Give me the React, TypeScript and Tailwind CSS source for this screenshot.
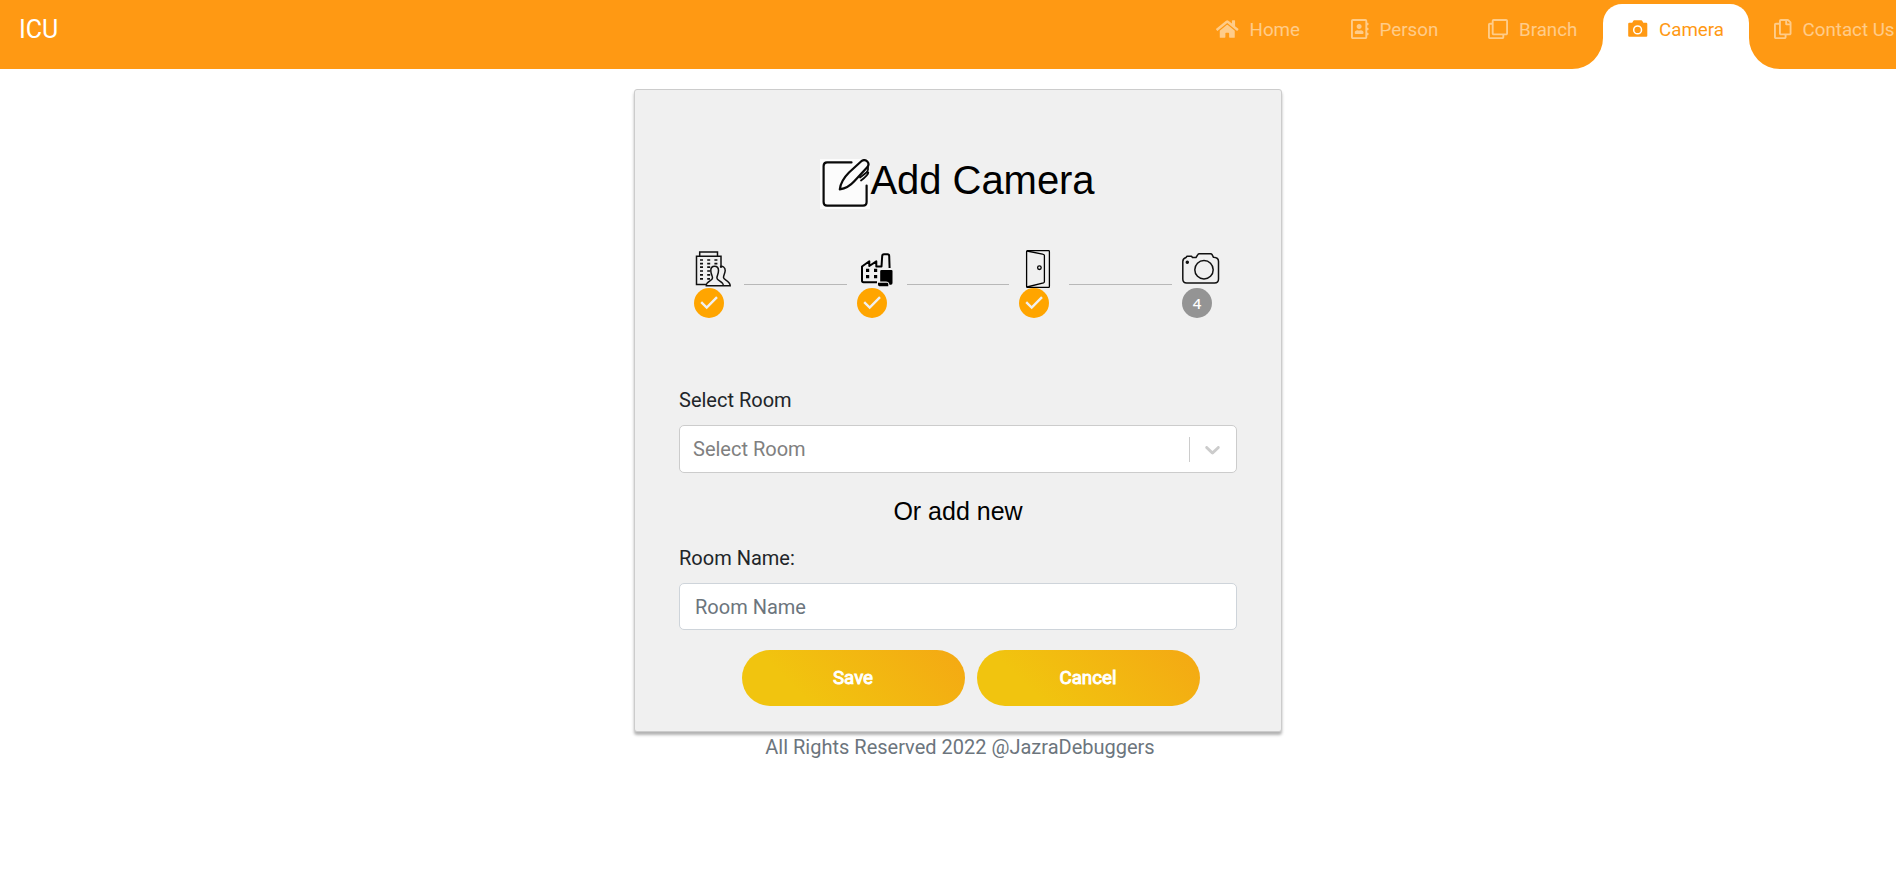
import type { ReactNode } from "react";
import { FaHome, FaRegAddressBook, FaRegClone, FaRegCopy } from "react-icons/fa";

const NAV_ITEM = "flex h-full items-center gap-[11px] pl-[25px]";

function NavItem({ icon, label, width }: { icon: ReactNode; label: string; width: string }) {
  return (
    <a className={`${NAV_ITEM} ${width} text-white/50`}>
      {icon}
      <span className="whitespace-nowrap pt-px">{label}</span>
    </a>
  );
}

function SolidCameraIcon() {
  return (
    <svg className="h-5 w-5 shrink-0" viewBox="0 0 20 20">
      <path
        d="M1.300 3.800H4.200L5.200 1.900Q5.500 1.300 6.200 1.300H13.300Q14 1.300 14.300 1.900L15.300 3.800H18.200Q19.300 3.800 19.300 4.900V16.700Q19.300 17.800 18.200 17.800H1.300Q.2 17.800 .2 16.700V4.900Q.2 3.800 1.300 3.800Z"
        fill="#ff9913"
      />
      <circle cx="9.600" cy="10.900" r="3.900" fill="none" stroke="#fff" strokeWidth="1.500" />
    </svg>
  );
}

function Navbar() {
  return (
    <header className="flex h-[69px] justify-between overflow-hidden bg-[#ff9913]">
      <a className="pl-[19px] pt-[11px] text-[25px] leading-[38px] text-white">ICU</a>
      <nav className="flex h-[69px] shrink-0 text-[18.75px]">
        <div className="flex h-[58px]">
          <NavItem width="w-[135px]" label="Home" icon={<FaHome className="h-5 w-[22.5px] shrink-0" />} />
          <NavItem width="w-[137px]" label="Person" icon={<FaRegAddressBook className="h-5 w-[17.5px] shrink-0" />} />
          <NavItem width="w-[140px]" label="Branch" icon={<FaRegClone className="h-5 w-5 shrink-0" />} />
        </div>
        <div className="relative mt-1 w-[146px] rounded-t-[19px] bg-white text-[#ff9913]">
          <a className="flex h-[50px] items-center gap-[11px] pl-[25px]">
            <SolidCameraIcon />
            <span className="pt-px">Camera</span>
          </a>
          <svg className="absolute bottom-0 -left-[31px] h-[31px] w-[31px]" viewBox="0 0 31 31">
            <path d="M31 0A31 31 0 0 1 0 31H31Z" fill="#fff" />
          </svg>
          <svg className="absolute bottom-0 -right-[31px] h-[31px] w-[31px]" viewBox="0 0 31 31">
            <path d="M0 0A31 31 0 0 0 31 31H0Z" fill="#fff" />
          </svg>
        </div>
        <div className="flex h-[58px]">
          <NavItem width="w-[147px]" label="Contact Us" icon={<FaRegCopy className="h-5 w-[17.5px] shrink-0" />} />
        </div>
      </nav>
    </header>
  );
}

function NoteIcon() {
  return (
    <svg className="h-[50px] w-[50px] shrink-0 bg-[#fcfcfc]" viewBox="0 0 50 50" fill="none" stroke="#0a0a0a" strokeWidth="2.200" strokeLinecap="round" strokeLinejoin="round">
      <path d="M31.500 3.400H7Q3.600 3.400 3.600 7V43Q3.600 46.600 7 46.600H43Q46.600 46.600 46.600 43V26.500" />
      <path d="M19.800 30.300C20.500 24 24 18.500 29 13.500L41 2.500C43 .8 45.500 .8 47.300 2.500C49 4.300 48.800 6.500 47 8.500L34.500 22C30.500 26.500 26 29.500 19.800 30.300Z" />
      <path d="M48 8.500C48.500 10.500 48 12 46.500 13.500L40 18.500M48.300 13.500C48.300 15.500 47 17 41 21.500" strokeWidth="1.800" />
    </svg>
  );
}

const STEP_ICON = "h-[38px] w-[38px]";

function CompanyIcon() {
  return (
    <svg className={STEP_ICON} viewBox="0 0 38 38" fill="none" stroke="#111" strokeWidth="1.500">
      <path d="M12 34.500H2.500V6.200H27V18M5.700 6V1.900H23.500V6" />
      <path d="M6 10h18M6 13.600h18M6 17.200h11M6 21h11M6 24.900h11M6 28.800h10" strokeDasharray="3 4.200" strokeWidth="1.700" />
      <path d="M26 16.600C28.500 15.500 31.300 17.500 31.200 20.500C31.100 23.500 29.500 25 29.500 27.500C29.500 30 36 30.500 36.200 35.700H30" />
      <path fill="#f0f0f0" d="M12.300 35.700C12.300 31 18.500 31 18.500 28C18.500 25.500 16.800 24 16.800 20.500C16.800 17.700 18.300 16.200 20.600 16.200C22.900 16.200 24.500 17.700 24.500 20.500C24.500 24 22.900 25.500 22.900 28C22.900 31 29.300 31 29.300 35.700Z" />
    </svg>
  );
}

function FactoryIcon() {
  return (
    <svg className={STEP_ICON} viewBox="0 0 38 38" fill="none" stroke="#000" strokeWidth="2" strokeLinejoin="round">
      <path d="M20 32.200H6.500Q5 32.200 5 30.500V16.500L12.300 11.300V16L19.300 11.300V16.500H24.500L25.200 6Q25.300 4.300 27 4.300H30.500Q32.200 4.300 32.200 6L32.600 18" />
      <path d="M9 18.800h3.200v3.200h-3.200ZM17 18.800h3.200v3.200h-3.200ZM9 25h3.200v3.200h-3.200ZM17 25h3.200v3.200h-3.200Z" fill="#000" stroke="none" />
      <path d="M24.500 20H34.500Q35.500 20 35.500 21V33Q35.500 34.700 34 34.700H32.500Q32 31.500 29 31.500H23.200V21.300Q23.200 20 24.500 20ZM21 32.700H30Q31.300 32.700 31.300 34V36.200H22.500Q21 36.200 21 34.500Z" fill="#000" stroke="none" />
    </svg>
  );
}

function DoorIcon() {
  return (
    <svg className={STEP_ICON} viewBox="0 0 38 38" fill="none" stroke="#000" strokeWidth="1.300" strokeLinejoin="round">
      <rect x="7.600" y=".7" width="22.800" height="36.700" rx=".8" />
      <path d="M8 1L23.500 4.200Q25.400 4.600 25.400 5.500V31.500Q25.400 32.600 24.500 32.900L8 37" />
      <circle cx="20.400" cy="17.700" r="1.800" />
    </svg>
  );
}

function CameraIcon() {
  return (
    <svg className={STEP_ICON} viewBox="0 0 38 38" fill="none" stroke="#111" strokeWidth="1.500" strokeLinejoin="round">
      <path d="M4 7.500L5 6.200H9.500L10.500 7.500H14L15.800 4.600Q16.300 3.700 17.400 3.700H28.500Q29.600 3.700 30.100 4.600L31.500 7.300Q36.500 7.500 36.500 11.500V29Q36.500 33 32.500 33H4.700Q.8 33 .8 29V11.500Q.8 8.500 4 7.500Z" />
      <circle cx="22" cy="19.700" r="9.200" />
      <circle cx="5.300" cy="12.300" r="1" fill="#111" />
    </svg>
  );
}

function Step({ icon, done, number }: { icon: ReactNode; done?: boolean; number: number }) {
  return (
    <div className="flex w-[38px] shrink-0 flex-col">
      {icon}
      {done ? (
        <span className="flex h-[30px] w-[30px] items-center justify-center rounded-full bg-[#ffa500]">
          <svg className="h-[30px] w-[30px]" viewBox="0 0 30 30" fill="none" stroke="#f0f0f0" strokeWidth="2.400">
            <path d="M7.200 14.200L12.700 19.500L23 9.200" />
          </svg>
        </span>
      ) : (
        <span className="flex h-[30px] w-[30px] items-center justify-center rounded-full bg-[#949494] font-['Noto_Sans',sans-serif] text-[15px] font-medium leading-[30px] text-white">
          {number}
        </span>
      )}
    </div>
  );
}

function StepLine() {
  return <div className="ml-3 mr-[10px] mt-[34px] h-px flex-1 bg-[#b8b8b8]" />;
}

function PillButton({ children }: { children: ReactNode }) {
  return (
    <button className="h-14 w-[223px] rounded-full bg-[linear-gradient(45deg,#f1c40f_0%,#f1c40f_25%,#f4aa13_95%)] pr-px text-[18.75px] text-white [-webkit-text-stroke:0.9px_white]">
      {children}
    </button>
  );
}

export default function App() {
  return (
    <div className="h-[884px] w-full overflow-hidden bg-white font-[Roboto,sans-serif] text-[20px] leading-[30px] text-[#212529]">
      <Navbar />
      <main className="ml-[634px] mt-5 w-[648px]">
        <form className="flex h-[643px] flex-col rounded-[3px] border border-[#ccc] bg-[#f0f0f0] px-[44px] pt-[69px] shadow-[0_3px_3px_rgba(0,0,0,0.3)]">
          <div className="flex items-start justify-center pr-px">
            <NoteIcon />
            <h1 className="font-['Liberation_Sans',sans-serif] text-[40px] leading-[43px] tracking-[-0.04px] text-black">Add Camera</h1>
          </div>
          <div className="mt-[41px] flex items-start pl-[15px] pr-[17px]">
            <Step number={1} done icon={<CompanyIcon />} />
            <StepLine />
            <Step number={2} done icon={<FactoryIcon />} />
            <StepLine />
            <Step number={3} done icon={<DoorIcon />} />
            <StepLine />
            <Step number={4} icon={<CameraIcon />} />
          </div>
          <label className="mt-[67px]">Select Room</label>
          <div className="mt-[10px] flex h-12 items-center rounded-[5px] border border-[#ccc] bg-white pl-[13px] text-[#808080]">
            <span className="flex-1">Select Room</span>
            <span className="h-[25px] w-px bg-[#ccc]" />
            <svg className="ml-[10px] mr-[11px] h-[25px] w-[25px]" viewBox="0 0 20 20" fill="#ccc">
              <path d="M4.516 7.548c0.436-0.446 1.043-0.481 1.576 0l3.908 3.747 3.908-3.747c0.533-0.481 1.141-0.446 1.574 0 0.436 0.445 0.408 1.197 0 1.615-0.406 0.418-4.695 4.502-4.695 4.502-0.217 0.223-0.502 0.335-0.787 0.335s-0.570-0.112-0.789-0.335c0 0-4.287-4.084-4.695-4.502s-0.436-1.170 0-1.615z" />
            </svg>
          </div>
          <h2 className="mt-[23px] text-center font-['Liberation_Sans',sans-serif] text-[25px] leading-[30px] text-black">Or add new</h2>
          <label className="mt-[17px]">Room Name:</label>
          <input
            placeholder="Room Name"
            className="mt-[10px] h-[47px] w-full rounded-[5px] border border-[#ced4da] bg-white px-[15px] placeholder:text-[#6c757d]"
          />
          <div className="mt-5 flex gap-3 pl-[63px]">
            <PillButton>Save</PillButton>
            <PillButton>Cancel</PillButton>
          </div>
        </form>
        <footer className="pl-1 text-center text-[#6c757d]">All Rights Reserved 2022 @JazraDebuggers</footer>
      </main>
    </div>
  );
}
